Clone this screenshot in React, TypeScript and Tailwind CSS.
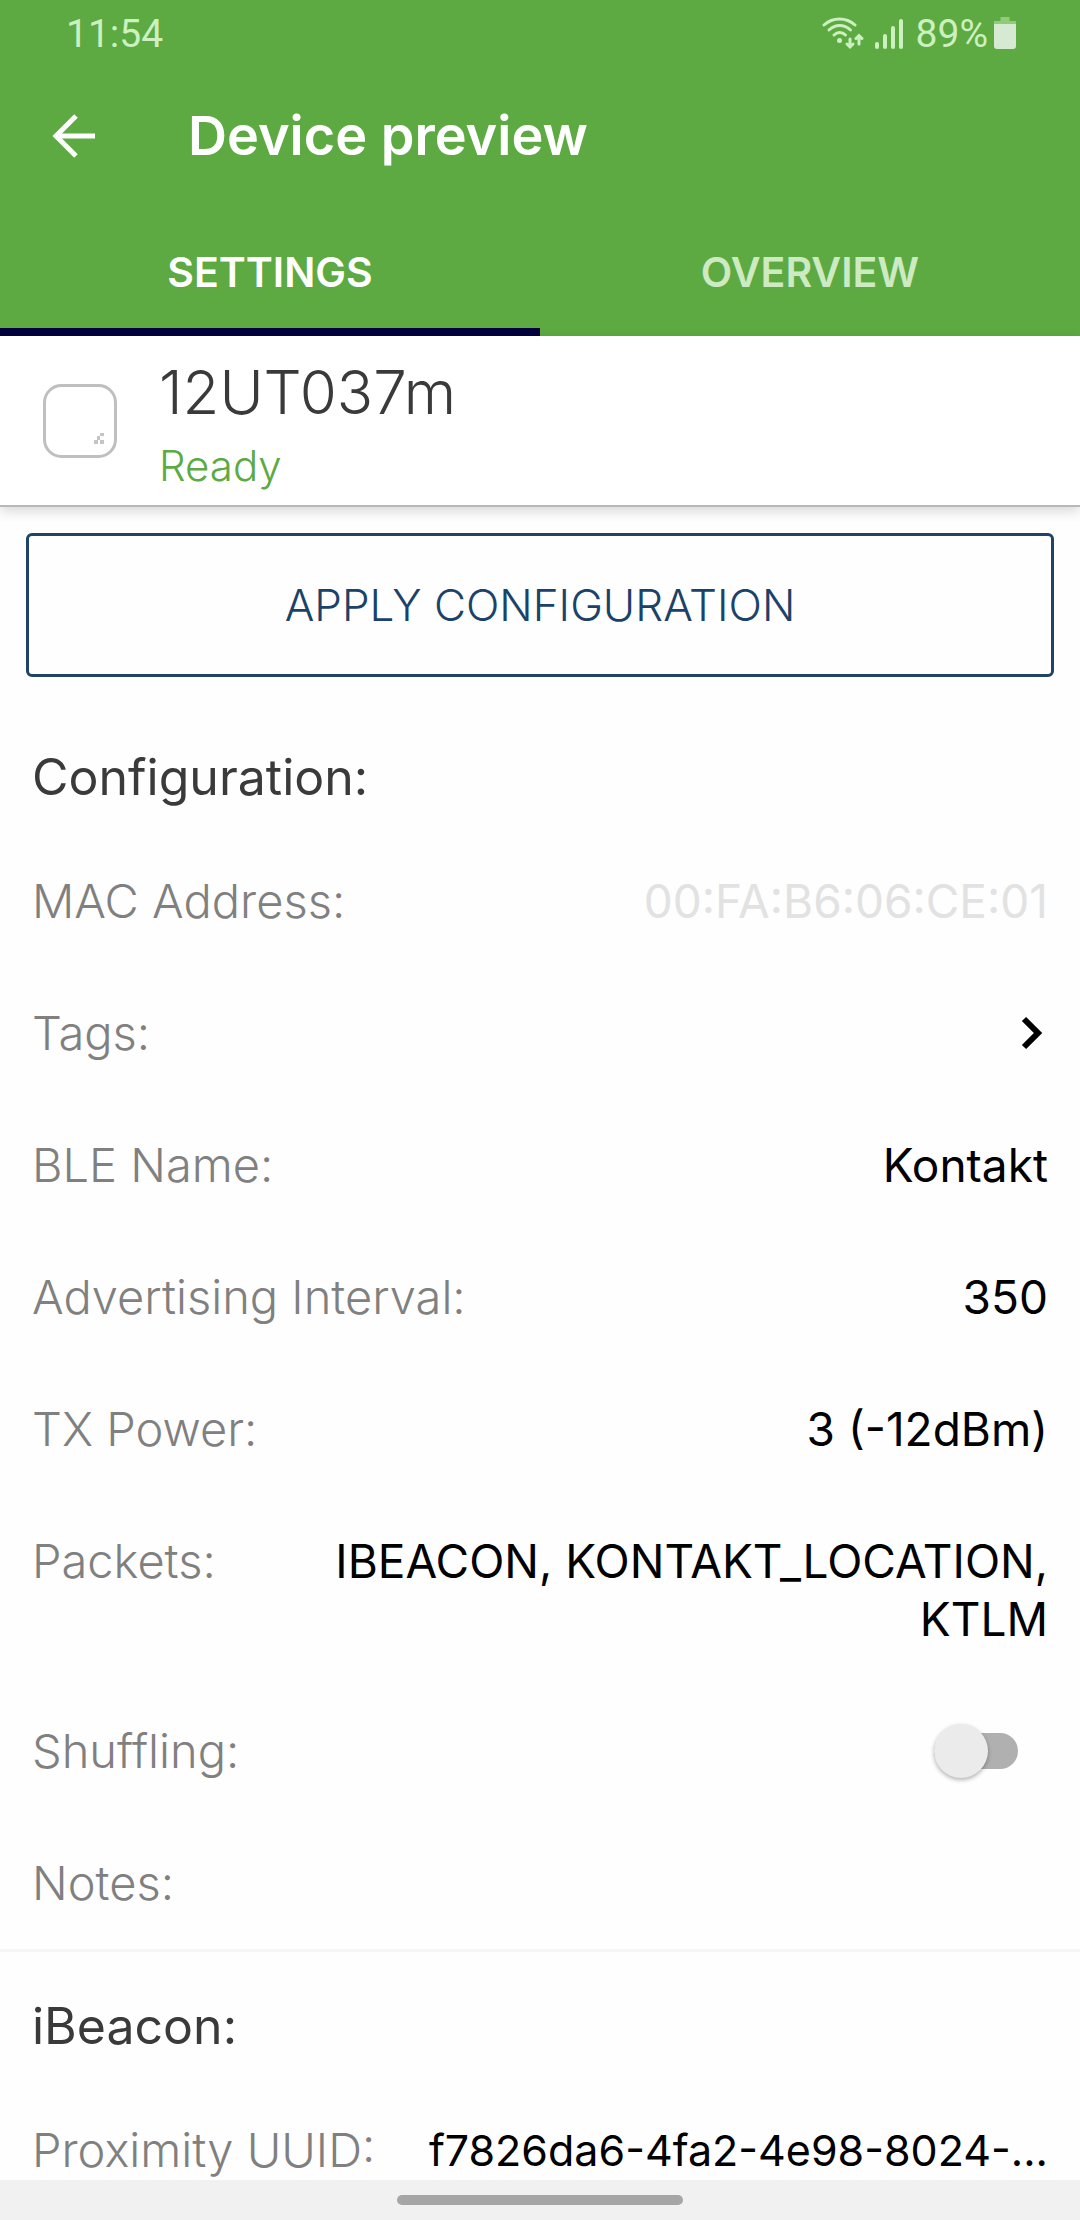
import { useState } from "react";
import type { ReactNode } from "react";

type Tab = 'settings' | 'overview';

function StatusBar() {
  return (
    <div className="flex h-[68px] items-center justify-between pl-[66px] pr-16 font-['Roboto',sans-serif] text-[39px] leading-none text-[#cdf0c0]">
      <span>11:54</span>
      <div className="flex items-center">
        {/* Wifi */}
        <svg width="42" height="34" viewBox="0 0 42 34" fill="none" stroke="currentColor" strokeWidth="3" strokeLinecap="round">
          <path d="M2 8C11 0 24 0 33 8" />
          <path d="M7 13C13.500 7 22 7 28.500 13" />
          <path d="M12 18C15.500 14.500 20 14.500 23.500 18" />
          <circle cx="17.500" cy="23.500" r="2.500" fill="currentColor" stroke="none" />
          <path d="M28 22V30M25 27L28 30L31 27" />
          <path d="M37 27V19M34 21.500L37 18.500L40 21.500" />
        </svg>
        {/* Signal */}
        <svg className="ml-2.5" width="30" height="34" viewBox="0 0 30 34" fill="currentColor">
          <rect x="1" y="25" width="4" height="7" rx="2" />
          <rect x="9" y="17" width="4" height="15" rx="2" />
          <rect x="17" y="9" width="4" height="23" rx="2" />
          <rect x="25" y="2" width="4" height="30" rx="2" />
        </svg>
        <span className="ml-3">89%</span>
        {/* Battery */}
        <svg className="ml-1.5" width="22" height="34" viewBox="0 0 22 34">
          <path d="M6.500 0h9v4H22v4H0V4h6.500z" fill="#90cb7c" />
          <path d="M0 7h22v22a3 3 0 0 1-3 3H3a3 3 0 0 1-3-3z" fill="#d5ead0" />
        </svg>
      </div>
    </div>
  );
}

function Row({ label, children }: { label: string; children?: ReactNode }) {
  return (
    <div className="flex justify-between gap-10 py-[37px] text-[46px] leading-[58px]">
      <span className="shrink-0 text-[47px] font-light text-[#808080]">{label}</span>
      {children}
    </div>
  );
}

function Value({ children }: { children: ReactNode }) {
  return <span className="min-w-0 text-right text-black">{children}</span>;
}

export default function App() {
  const [tab, setTab] = useState<Tab>('settings');
  const [shuffling, setShuffling] = useState(false);

  return (
    <div className="min-h-screen bg-[#fefefe] font-['Inter',sans-serif]">
      <header className="bg-[#5caa41]">
        <StatusBar />

        {/* Toolbar */}
        <div className="flex h-[136px] items-center gap-[92px] px-[52px]">
          <button aria-label="Back" className="text-white">
            <svg width="44" height="44" viewBox="0 0 44 44" fill="none" stroke="currentColor" strokeWidth="5">
              <path d="M43 22H4M24 2L4 22L24 42" />
            </svg>
          </button>
          <h1 className="text-[54px] font-semibold leading-[64px] text-white">Device preview</h1>
        </div>

        {/* Tabs */}
        <div className="grid h-[132px] grid-cols-2 text-[41px] font-semibold">
          <button
            onClick={() => setTab('settings')}
            className={`border-b-8 pt-3.5 ${tab === 'settings' ? 'border-[#00003c] text-white' : 'border-transparent text-[#cdeac3]'}`}
          >
            SETTINGS
          </button>
          <button
            onClick={() => setTab('overview')}
            className={`border-b-8 pt-3.5 ${tab === 'overview' ? 'border-[#00003c] text-white' : 'border-transparent text-[#cdeac3]'}`}
          >
            OVERVIEW
          </button>
        </div>
      </header>

      {/* Device */}
      <section className="flex items-start gap-[42px] border-b-2 border-[#b8b8b8] bg-white px-[43px] pt-5 pb-[11px] shadow-[0_4px_12px_rgba(0,0,0,0.16)]">
        <svg className="mt-7 shrink-0" width="74" height="74" viewBox="0 0 74 74" fill="none">
          <rect x="1.500" y="1.500" width="71" height="71" rx="17" stroke="#bfbfbf" strokeWidth="3" />
          <path d="M57 49h4v3h-4zM54 52h3v4h-3zM51 56h4v4h-4zM57 56h4v4h-4z" fill="#c4c4c4" />
        </svg>
        <div>
          <h2 className="text-[60px] font-light leading-[72px] text-[#3a3a3a]">12UT037m</h2>
          <p className="pt-2.5 text-[42px] font-light leading-[56px] text-[#5caa41]">Ready</p>
        </div>
      </section>

      <main>
        <div className="px-[26px] pt-[26px]">
          <button className="h-36 w-full rounded-md border-3 border-[#1f4468] text-[44px] font-light text-[#1b4268]">
            APPLY CONFIGURATION
          </button>
        </div>

        <section className="border-b-3 border-[#f6f6f6] px-8 pt-[42px]">
          <h3 className="py-[29px] text-[50px] leading-[58px] text-[#3a3a3a]">Configuration:</h3>
          <Row label="MAC Address:">
            <span className="text-right text-[#e2e2e2]">00:FA:B6:06:CE:01</span>
          </Row>
          <Row label="Tags:">
            <button aria-label="Edit tags" className="mr-1">
              <svg width="24" height="34" viewBox="0 0 24 34" fill="none" stroke="#000" strokeWidth="6">
                <path d="M4 3L18 17L4 31" />
              </svg>
            </button>
          </Row>
          <Row label="BLE Name:">
            <Value>Kontakt</Value>
          </Row>
          <Row label="Advertising Interval:">
            <Value>350</Value>
          </Row>
          <Row label="TX Power:">
            <Value>3 (-12dBm)</Value>
          </Row>
          <Row label="Packets:">
            <Value>IBEACON, KONTAKT_LOCATION, KTLM</Value>
          </Row>
          <Row label="Shuffling:">
            <label className="relative mr-[30px] flex w-[84px] items-center">
              <input
                type="checkbox"
                role="switch"
                aria-label="Shuffling"
                checked={shuffling}
                onChange={(e) => setShuffling(e.target.checked)}
                className="peer h-9 w-full appearance-none rounded-full bg-[#b0b0b0]"
              />
              <span className="absolute left-0 size-[54px] rounded-full bg-[#ebebeb] shadow-[0_2px_4px_rgba(0,0,0,0.3)] peer-checked:left-[30px]" />
            </label>
          </Row>
          <Row label="Notes:" />
        </section>

        <section className="px-8 pt-4">
          <h3 className="py-[29px] text-[50px] leading-[58px] text-[#3a3a3a]">iBeacon:</h3>
          <Row label="Proximity UUID:">
            <span className="min-w-0 text-right text-[43px] text-black">f7826da6-4fa2-4e98-8024-...</span>
          </Row>
        </section>
      </main>

      {/* Gesture bar */}
      <nav className="fixed inset-x-0 bottom-0 flex h-10 items-center justify-center bg-[#f1f1f1]">
        <div className="h-2.5 w-[286px] rounded-full bg-[#a6a6a6]" />
      </nav>
    </div>
  );
}
